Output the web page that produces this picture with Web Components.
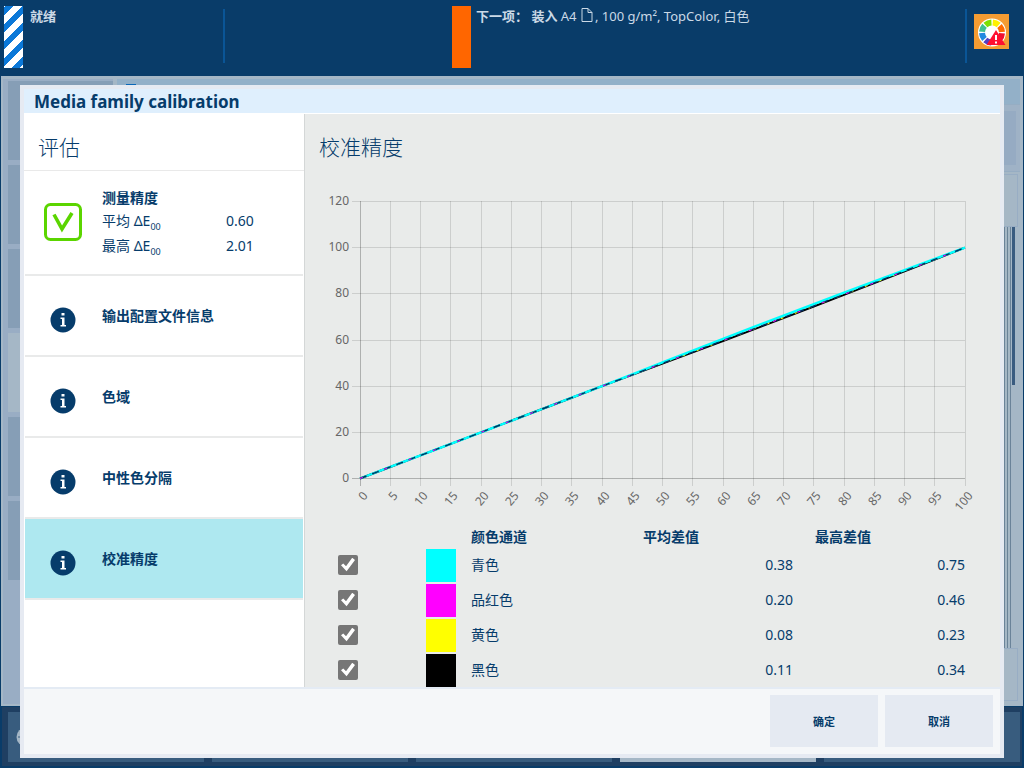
<!DOCTYPE html>
<html lang="zh-CN">
<head>
<meta charset="utf-8">
<title>Media family calibration</title>
<style>
	html, body {
		height: 100%;
		margin: 0;
	}

	body {
		font: 14px/20px "Noto Sans", "Noto Sans CJK SC", sans-serif;
		color: #063c6b;
		background: #093c69;
		overflow: hidden;
	}
</style>
</head>
<body>

<press-app>
	<status-bar slot="status"></status-bar>
	<press-workspace slot="workspace"></press-workspace>
	<modal-dialog slot="dialog" heading="Media family calibration">
		<result-list slot="side" heading="评估">
			<result-item state="ok" heading="测量精度">
				<delta-value label="平均 ΔE" value="0.60"></delta-value>
				<delta-value label="最高 ΔE" value="2.01"></delta-value>
			</result-item>
			<result-item heading="输出配置文件信息"></result-item>
			<result-item heading="色域"></result-item>
			<result-item heading="中性色分隔"></result-item>
			<result-item heading="校准精度" selected></result-item>
		</result-list>
		<accuracy-view heading="校准精度"></accuracy-view>
		<dialog-button slot="actions">确定</dialog-button>
		<dialog-button slot="actions">取消</dialog-button>
	</modal-dialog>
</press-app>

<script>
// Attach an open shadow root holding the given markup
function render (host, html) {
	const root = host.attachShadow({mode: "open"});
	const template = document.createElement("template");
	template.innerHTML = html;
	root.appendChild(template.content.cloneNode(true));
	return root;
}

class PressApp extends HTMLElement {
	constructor () {
		super();
		render(this, `
			<style>
				:host {
					position: relative;
					display: flex;
					flex-direction: column;
					height: 100vh;
				}

				/* The dialog lies over the workspace */
				.overlay {
					position: absolute;
					inset: 85px 20px 10px;
					display: grid;
				}
			</style>
			<slot name="status"></slot>
			<slot name="workspace"></slot>
			<div class="overlay"><slot name="dialog"></slot></div>
		`);
	}
}

class StatusBar extends HTMLElement {
	constructor () {
		super();
		render(this, `
			<style>
				:host {
					display: flex;
					flex: none;
					box-sizing: border-box;
					height: 76px;
					padding: 6px 15px 8px 4px;
					font-size: 13px;
					line-height: 20px;
					color: #cbd9e6;
				}

				.job {
					display: flex;
					gap: 7px;
					width: 219px;
				}

				.next {
					display: flex;
					gap: 5px;
					flex: 1;
					margin-left: 227px;
				}

				.flag {
					width: 19px;
					height: 62px;
				}

				.busy { background: repeating-linear-gradient(135deg, #0b78d8 1px 7px, #fff 7px 13px); }
				.load { background: #f60; }

				.rule {
					width: 2px;
					height: 54px;
					margin-top: 3px;
					background: #0a5596;
				}

				p { margin: 0; }

				.sheet {
					width: 12px;
					height: 14px;
					margin: 0 2px 0 1px;
					vertical-align: -1px;
				}

				.alert {
					width: 35px;
					height: 35px;
					margin: 8px 0 0 7px;
				}
			</style>
			<div class="job">
				<div class="flag busy"></div>
				<b>就绪</b>
			</div>
			<div class="rule"></div>
			<div class="next">
				<div class="flag load"></div>
				<p><b>下一项： 装入</b> A4 <svg class="sheet" viewBox="0 0 12 14"><path d="M1 .5h6l4 4v9H1zM7 .5v4h4" fill="none" stroke="currentColor"/></svg>, 100 g/m², TopColor, 白色</p>
			</div>
			<div class="rule"></div>
			<svg class="alert" viewBox="0 0 35 35">
				<rect width="35" height="35" fill="#f59c32"/>
				<circle cx="18" cy="18.500" r="14" fill="#fff"/>
				<g fill="none" stroke-width="6" stroke-dasharray="6.600 60">
					<circle cx="18" cy="18.500" r="10" stroke="#7ee000" transform="rotate(-131 18 18.500)"/>
					<circle cx="18" cy="18.500" r="10" stroke="#fff000" transform="rotate(-86 18 18.500)"/>
					<circle cx="18" cy="18.500" r="10" stroke="#ff6a00" transform="rotate(-41 18 18.500)"/>
					<circle cx="18" cy="18.500" r="10" stroke="#f01030" transform="rotate(4 18 18.500)"/>
					<circle cx="18" cy="18.500" r="10" stroke="#5540c0" transform="rotate(94 18 18.500)"/>
					<circle cx="18" cy="18.500" r="10" stroke="#2288e0" transform="rotate(139 18 18.500)"/>
					<circle cx="18" cy="18.500" r="10" stroke="#40c090" transform="rotate(-176 18 18.500)"/>
				</g>
				<path d="M22 16l9.500 15h-19z" fill="#ff1030"/>
				<path d="M21 21h2v5h-2zM21 27.500h2v2h-2z" fill="#fff"/>
			</svg>
		`);
	}
}

class PressWorkspace extends HTMLElement {
	constructor () {
		super();
		render(this, `
			<style>
				:host {
					display: flex;
					flex: 1;
					flex-direction: column;
					gap: 1px;
					padding: 0 1px 2px;
				}

				.main {
					display: flex;
					flex: 1;
					gap: 4px;
					padding: 3px 3px 2px 2px;
					background: #a5b7c6;
				}

				.queue {
					display: grid;
					grid-auto-rows: 79px;
					align-content: start;
					gap: 5px;
					box-sizing: border-box;
					width: 110px;
					padding: 2px 0 0 5px;
					background: #99adc4;
				}

				.queue i { background: #869eb6; }
				.queue .on { background: #a5b7c6; }

				.content {
					display: flex;
					flex: 1;
					flex-direction: column;
				}

				.title {
					height: 25px;
					padding: 5px 9px 0;
					box-sizing: border-box;
					background: #93b0c8;
				}

				.title i {
					display: block;
					width: 10px;
					height: 10px;
					background: #0b68b8;
				}

				.tools {
					height: 54px;
					padding: 6px 4px;
					border: solid #96adc3;
					border-width: 1px 0;
					background: #9fb2c6;
				}

				.tools i {
					display: block;
					height: 100%;
					background: #96abc3;
				}

				.arrow {
					height: 51px;
					margin: 2px 2px 0 0;
					border: 1px solid #98adc4;
				}

				.track {
					display: flex;
					justify-content: flex-end;
					flex: 1;
					gap: 2px;
					margin-right: 5px;
				}

				.track i {
					width: 1px;
					background: #6a8399;
				}

				.track .thumb {
					width: 3px;
					height: 158px;
					margin-left: -1px;
					background: #3a5c80;
				}

				.arrow.down { margin: 0 2px 3px 0; }

				.tabs {
					display: grid;
					grid-template-columns: repeat(5, 1fr);
					gap: 8px;
					box-sizing: border-box;
					height: 59px;
					margin: 0 1px;
					padding: 5px 2px 4px 6px;
					background: #1f3f62;
				}

				.tabs i {
					display: flex;
					align-items: center;
					background: #385c7e;
				}

				.tabs .on { background: #a5b7c6; }

				.tabs svg {
					width: 20px;
					height: 20px;
					margin-left: 8px;
				}
			</style>
			<div class="main">
				<div class="queue"><i></i><i></i><i></i><i class="on"></i><i></i><i></i></div>
				<div class="content">
					<div class="title"><i></i></div>
					<div class="tools"><i></i></div>
					<div class="arrow"></div>
					<div class="track"><i></i><i></i><i></i><i class="thumb"></i></div>
					<div class="arrow down"></div>
				</div>
			</div>
			<div class="tabs">
				<i><svg viewBox="0 0 20 20"><circle cx="10" cy="10" r="9.500" fill="#a5b7c6"/><path d="M2 10h16" stroke="#385c7e"/></svg></i>
				<i></i><i></i><i class="on"></i><i></i>
			</div>
		`);
	}
}

class ModalDialog extends HTMLElement {
	constructor () {
		super();
		const root = render(this, `
			<style>
				:host {
					display: flex;
					flex-direction: column;
					min-height: 0;
					border: 4px solid #e6eaf2;
				}

				h1 {
					margin: 0;
					padding: 2px 10px 0;
					border-bottom: 1px solid #fff;
					font-size: 17px;
					line-height: 22px;
					background: #dfeffd;
				}

				.body {
					display: flex;
					flex: 1;
					min-height: 0;
					overflow: hidden;
					background: #e9ebea;
				}

				footer {
					display: flex;
					justify-content: flex-end;
					gap: 7px;
					padding: 6px 7px 7px;
					border-top: 2px solid #e4ebf4;
					background: #f5f7f9;
				}
			</style>
			<h1></h1>
			<div class="body">
				<slot name="side"></slot>
				<slot></slot>
			</div>
			<footer><slot name="actions"></slot></footer>
		`);
		root.querySelector("h1").textContent = this.getAttribute("heading");
		this.setAttribute("role", "dialog");
	}
}

class DialogButton extends HTMLElement {
	constructor () {
		super();
		render(this, `
			<style>
				:host { display: block; }

				button {
					width: 108px;
					height: 52px;
					padding: 2px 0 0;
					border: 0;
					font: bold 11px/20px "Noto Sans", "Noto Sans CJK SC", sans-serif;
					color: inherit;
					background: #e5eaf2;
				}
			</style>
			<button type="button"><slot></slot></button>
		`);
	}
}

class ResultList extends HTMLElement {
	constructor () {
		super();
		const root = render(this, `
			<style>
				:host {
					flex: none;
					width: 280px;
					border-right: 1px solid #d4d7d7;
					background: #fff;
				}

				h2 {
					margin: 0;
					padding: 18px 14px 8px;
					border-bottom: 1px solid #e9e9e9;
					font-size: 21px;
					font-weight: 300;
					line-height: 30px;
				}

				nav { padding: 0 1px; }
			</style>
			<h2></h2>
			<nav><slot></slot></nav>
		`);
		root.querySelector("h2").textContent = this.getAttribute("heading");
	}
}

class ResultItem extends HTMLElement {
	constructor () {
		super();
		const ok = this.getAttribute("state") === "ok";
		const root = render(this, `
			<style>
				:host {
					display: grid;
					grid-template-columns: 76px 1fr;
					column-gap: 1px;
					align-items: center;
					box-sizing: border-box;
					min-height: 81px;
					border-bottom: 2px solid #e9eaea;
				}

				:host([state=ok]) { min-height: 105px; }
				:host([selected]) { background: #aee8f0; }

				svg {
					justify-self: center;
					width: 38px;
					height: 38px;
				}

				.ok { margin-bottom: 2px; }
				.info { margin-top: 9px; }

				h3 {
					margin: 0;
					font-size: 14px;
					line-height: 20px;
				}
			</style>
			${ok ? `
				<svg class="ok" viewBox="0 0 38 38">
					<rect x="1.500" y="1.500" width="35" height="35" rx="5" fill="none" stroke="#5bd500" stroke-width="3"/>
					<path d="M10 11.500l8 14.500 10-16" fill="none" stroke="#5bd500" stroke-width="3.600"/>
				</svg>
			` : `
				<svg class="info" viewBox="0 0 38 38">
					<circle cx="19" cy="19" r="12.500" fill="#063c6b"/>
					<path d="M17.500 12h3v2.500h-3zM16.500 16.500h4v7.500H22v1.500h-5.500V24h1.500v-6h-1.500z" fill="#fff"/>
				</svg>
			`}
			<div>
				<h3></h3>
				<slot></slot>
			</div>
		`);
		root.querySelector("h3").textContent = this.getAttribute("heading");
	}
}

class DeltaValue extends HTMLElement {
	constructor () {
		super();
		render(this, `
			<style>
				:host {
					display: grid;
					grid-template-columns: 124px 1fr;
					line-height: 25px;
				}

				sub {
					font-size: 9px;
					line-height: 1;
				}
			</style>
			<span>${this.getAttribute("label")}<sub>00</sub></span>
			<span>${this.getAttribute("value")}</span>
		`);
	}
}

class AccuracyView extends HTMLElement {
	constructor () {
		super();
		const root = render(this, `
			<style>
				:host {
					flex: 1;
					min-width: 0;
					padding: 18px 18px 0 14px;
				}

				h2 {
					margin: 0 0 31px;
					font-size: 21px;
					font-weight: 300;
					line-height: 30px;
				}
			</style>
			<h2></h2>
			<line-chart></line-chart>
			<channel-table></channel-table>
		`);
		root.querySelector("h2").textContent = this.getAttribute("heading");
	}
}

// Plot area inside the chart's viewBox
const PLOT = {left: 41, top: 8, width: 605, height: 277};

class LineChart extends HTMLElement {
	constructor () {
		super();
		render(this, `
			<style>
				:host { display: block; }

				svg {
					display: block;
					width: 100%;
				}

				text {
					font-size: 12px;
					fill: #666;
					text-anchor: end;
				}

				.grid {
					stroke: #000;
					stroke-opacity: .12;
				}

				.axis { stroke-opacity: .25; }
			</style>
			<svg viewBox="0 0 663 332" role="img">
				${this.grid()}
				${this.curve(-.5, "#000", 2)}
				${this.curve(-.4, "#ff0", 1, "3 12")}
				${this.curve(.6, "#0ff", 2.4)}
				${this.curve(-.3, "#003060", 1.4, "7 6")}
				${this.curve(-.3, "#f0f", 1, "3 23")}
			</svg>
		`);
	}

	x (value) {
		return PLOT.left + PLOT.width * value / 100;
	}

	y (value) {
		return PLOT.top + PLOT.height * (1 - value / 120) + .5;
	}

	grid () {
		const right = PLOT.left + PLOT.width;
		const bottom = PLOT.top + PLOT.height;
		let out = "";

		for (let v = 0; v <= 120; v += 20) {
			const y = Math.floor(this.y(v)) + .5;
			out += `<path class="grid ${v ? "" : "axis"}" d="M${PLOT.left - 8} ${y}H${right}"/>
				<text x="${PLOT.left - 11}" y="${y + 3}">${v}</text>`;
		}

		for (let v = 0; v <= 100; v += 5) {
			const x = Math.floor(this.x(v)) + .5;
			out += `<path class="grid ${v ? "" : "axis"}" d="M${x} ${PLOT.top}V${bottom + 8}"/>
				<text transform="translate(${x + 8} ${bottom + 18}) rotate(-50)">${v}</text>`;
		}

		return out;
	}

	// Nearly straight line that bows away from the diagonal above 40
	curve (bow, color, width, dash = "none") {
		const points = [];

		for (let v = 0; v <= 100; v += 5) {
			const lift = v > 40 ? bow * Math.sin(Math.PI * (v - 40) / 60) : 0;
			points.push(`${this.x(v)},${this.y(v + lift)}`);
		}

		return `<polyline points="${points.join(" ")}" fill="none" stroke="${color}" stroke-width="${width}" stroke-dasharray="${dash}"/>`;
	}
}

const CHANNELS = [
	["青色", "#0ff", "0.38", "0.75"],
	["品红色", "#f0f", "0.20", "0.46"],
	["黄色", "#ff0", "0.08", "0.23"],
	["黑色", "#000", "0.11", "0.34"],
];

class ChannelTable extends HTMLElement {
	constructor () {
		super();
		render(this, `
			<style>
				:host { display: block; }

				table {
					width: 100%;
					table-layout: fixed;
					border-collapse: collapse;
				}

				.pick { width: 107px; }
				.color { width: 40px; }

				th, td {
					height: 33px;
					padding: 0 17px 2px 5px;
					line-height: 20px;
					text-align: left;
				}

				th {
					height: 23px;
					padding-bottom: 0;
				}

				td.value { text-align: right; }

				td:nth-child(1) { padding-left: 19px; }
				td:nth-child(2) { padding: 1px 0; }

				.swatch {
					width: 30px;
					height: 33px;
				}

				input {
					display: grid;
					place-items: center;
					appearance: none;
					width: 20px;
					height: 20px;
					margin: 0;
					border-radius: 2px;
					background: #767676;
				}

				input:checked::before {
					content: "";
					width: 14px;
					height: 14px;
					background: #fff;
					clip-path: polygon(0 56%, 16% 42%, 36% 62%, 80% 2%, 100% 18%, 40% 98%);
				}
			</style>
			<table>
				<colgroup><col class="pick"><col class="color"><col><col><col></colgroup>
				<thead>
					<tr><th></th><th></th><th>颜色通道</th><th>平均差值</th><th>最高差值</th></tr>
				</thead>
				<tbody>
					${CHANNELS.map(([name, color, mean, max], i) => `
						<tr>
							<td><input type="checkbox" id="channel${i}" checked></td>
							<td><div class="swatch" style="background: ${color}"></div></td>
							<td><label for="channel${i}">${name}</label></td>
							<td class="value">${mean}</td>
							<td class="value">${max}</td>
						</tr>
					`).join("")}
				</tbody>
			</table>
		`);
	}
}

customElements.define("press-app", PressApp);
customElements.define("status-bar", StatusBar);
customElements.define("press-workspace", PressWorkspace);
customElements.define("modal-dialog", ModalDialog);
customElements.define("dialog-button", DialogButton);
customElements.define("result-list", ResultList);
customElements.define("result-item", ResultItem);
customElements.define("delta-value", DeltaValue);
customElements.define("line-chart", LineChart);
customElements.define("channel-table", ChannelTable);
customElements.define("accuracy-view", AccuracyView);
</script>
</body>
</html>
